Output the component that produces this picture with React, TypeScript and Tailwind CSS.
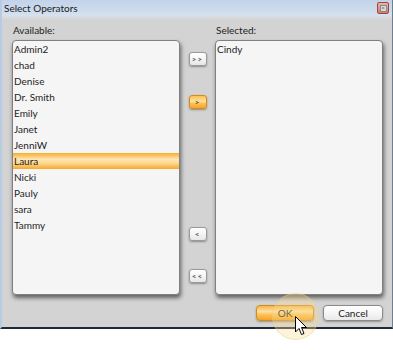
import React from "react";

const available = ["Admin2", "chad", "Denise", "Dr. Smith", "Emily", "Janet", "JenniW", "Laura", "Nicki", "Pauly", "sara", "Tammy"];

function SmallBtn({ label, active }: { label: string; active?: boolean }) {
  return (
    <div
      className={
        "w-[18px] h-[14px] rounded-[3px] border flex items-center justify-center text-[8px] font-bold leading-none tracking-[1px] shadow-[0_1px_2px_rgba(0,0,0,0.35)] " +
        (active
          ? "border-[#d98a1c] bg-[linear-gradient(to_bottom,#fbc050_0%,#fde0a0_45%,#fbc35a_60%,#f7a626_100%)] text-[#6b4a10]"
          : "border-[#9a9a9a] bg-[linear-gradient(to_bottom,#ffffff_0%,#f4f4f4_50%,#e6e6e6_100%)] text-[#555]")
      }
    >
      {label}
    </div>
  );
}

export default function App() {
  return (
    <div className="relative w-[393px] h-[350px] bg-white overflow-hidden" style={{ fontFamily: 'Lato, "Open Sans", sans-serif' }}>
      <div className="h-[329px] flex flex-col border-l-[2px] border-l-[#b7cbe4] border-r border-r-[#6f7f90] border-b-[2px] border-b-[#1f2a35]">
        {/* title bar */}
        <div className="h-[16px] flex items-center justify-between pl-[2px] pr-[3px] bg-[linear-gradient(to_bottom,#c2d3e9_0%,#cfdcee_70%,#d8e2ee_100%)]">
          <span className="text-[10px] leading-[16px] text-[#1a1a1a]">Select Operators</span>
          <div className="w-[12px] h-[12px] rounded-[2px] border border-[#a3473c] bg-[linear-gradient(to_bottom,#eab2a8,#d57a6c)] flex items-center justify-center">
            <div className="w-[7px] h-[7px] bg-[#d9d9d9] border border-[#8c8c8c] flex items-center justify-center text-[6px] leading-none text-[#555]">×</div>
          </div>
        </div>
        {/* body */}
        <div className="flex-1 bg-[linear-gradient(to_bottom,#d9e0e8_0px,#d3d3d3_4px,#d3d3d3_100%)] pl-[10px] pr-[9px] pt-[6px] flex flex-col">
          <div className="flex">
            <div className="w-[168px] text-[10px] leading-[16px] text-[#222] pl-[1px]">Available:</div>
            <div className="w-[35px]" />
            <div className="w-[168px] text-[10px] leading-[16px] text-[#222] pl-[1px]">Selected:</div>
          </div>
          <div className="flex mt-[2px] h-[255px]">
            <div className="w-[168px] h-full rounded-[4px] border border-[#808080] bg-[#f5f5f5] shadow-[1px_3px_4px_rgba(0,0,0,0.55)] overflow-hidden">
              {available.map((n) => (
                <div
                  key={n}
                  className={
                    "h-[16px] text-[10px] leading-[16px] pl-[1px] text-[#1e1e1e] " +
                    (n === "Laura"
                      ? "bg-[linear-gradient(to_bottom,#f9ad2c_0%,#fde6b6_40%,#fcd78c_65%,#f8a82c_100%)]"
                      : "")
                  }
                >
                  {n}
                </div>
              ))}
            </div>
            <div className="w-[35px] h-full flex flex-col items-center">
              <div className="mt-[12px]"><SmallBtn label=">>" /></div>
              <div className="mt-[29px]"><SmallBtn label=">" active /></div>
              <div className="mt-[118px]"><SmallBtn label="<" /></div>
              <div className="mt-[28px]"><SmallBtn label="<<" /></div>
            </div>
            <div className="w-[168px] h-full rounded-[4px] border border-[#808080] bg-[#f5f5f5] shadow-[1px_3px_4px_rgba(0,0,0,0.55)] overflow-hidden">
              <div className="h-[16px] text-[10px] leading-[16px] pl-[1px] text-[#1e1e1e]">Cindy</div>
            </div>
          </div>
          <div className="flex justify-end gap-[9px] mt-[10px]">
            <div className="w-[58px] h-[16px] rounded-[4px] border border-[#d08a1e] bg-[linear-gradient(to_bottom,#f9b446_0%,#fde0a2_40%,#fbc460_60%,#f6a21f_100%)] flex items-center justify-center text-[10px] text-[#222] shadow-[0_1px_2px_rgba(0,0,0,0.3)]">OK</div>
            <div className="w-[60px] h-[16px] rounded-[4px] border border-[#8a8a8a] bg-[linear-gradient(to_bottom,#ffffff_0%,#f6f6f6_50%,#e9e9e9_100%)] flex items-center justify-center text-[10px] text-[#222] shadow-[0_1px_2px_rgba(0,0,0,0.3)]">Cancel</div>
          </div>
        </div>
      </div>
      {/* click highlight */}
      <div className="absolute left-[272px] top-[293px] w-[47px] h-[47px] rounded-full bg-[rgba(246,222,150,0.35)] border border-[rgba(230,200,120,0.35)]" />
      {/* cursor */}
      <svg className="absolute left-[295px] top-[316px]" width="13" height="20" viewBox="0 0 13 20">
        <path d="M0.5 0.5 L0.5 16 L4 12.5 L6.5 18.5 L9 17.5 L6.5 11.5 L11.5 11.5 Z" fill="white" stroke="black" strokeWidth="1" strokeLinejoin="round" />
      </svg>
    </div>
  );
}
